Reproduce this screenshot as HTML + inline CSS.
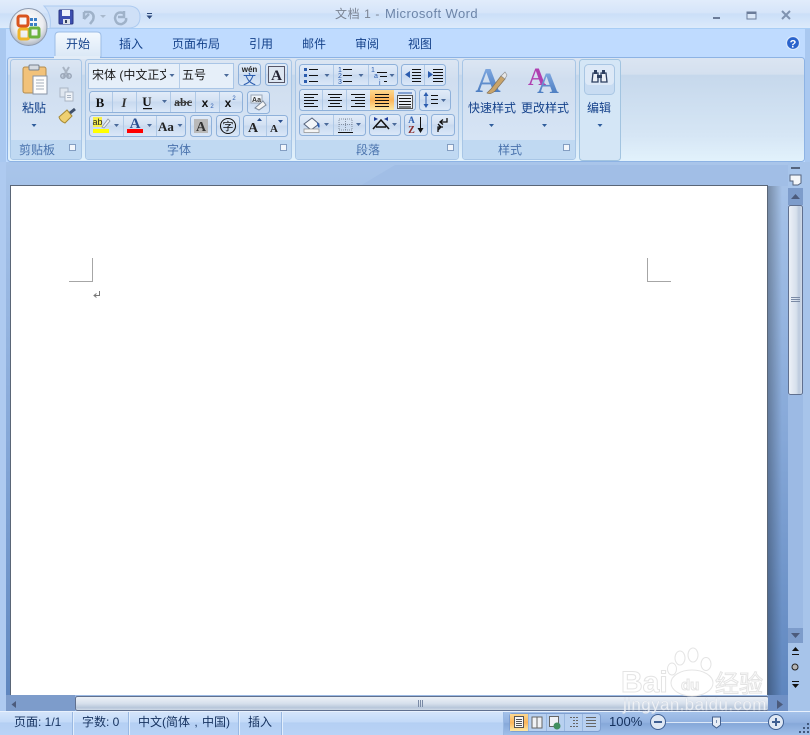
<!DOCTYPE html>
<html><head><meta charset="utf-8"><style>
html,body{margin:0;padding:0;width:810px;height:735px;overflow:hidden;background:#a7c4ea}
svg{display:block}
text{font-family:"Liberation Sans","Noto Sans CJK SC",sans-serif;font-size:12px}
.t{fill:#15428b;text-anchor:middle}
.k{fill:#1a1a1a}
.l{fill:#4a73ad;text-anchor:middle}
.btn{fill:url(#btn);stroke:#8fb1da}
.grp{fill:url(#grp);stroke:#a8c6e6}
.lab{fill:#c0d9f2}
.sep{stroke:#b0c9e6}
.ln{stroke:#111;stroke-width:1;fill:none}
</style></head><body>
<svg width="810" height="735" viewBox="0 0 810 735" xmlns="http://www.w3.org/2000/svg">
<defs>
<linearGradient id="title" x1="0" y1="0" x2="0" y2="1"><stop offset="0" stop-color="#e1ecfb"/><stop offset=".45" stop-color="#d6e5f9"/><stop offset=".5" stop-color="#cbdff8"/><stop offset="1" stop-color="#dceafb"/></linearGradient>
<linearGradient id="rib" x1="0" y1="0" x2="0" y2="1"><stop offset="0" stop-color="#dbe5f2"/><stop offset=".16" stop-color="#d4e0ef"/><stop offset=".17" stop-color="#c6d8ec"/><stop offset=".75" stop-color="#d6e6f5"/><stop offset="1" stop-color="#e2f2fc"/></linearGradient>
<linearGradient id="grp" x1="0" y1="0" x2="0" y2="1"><stop offset="0" stop-color="#dce6f3"/><stop offset=".2" stop-color="#d0deef"/><stop offset=".8" stop-color="#d6e4f5"/><stop offset="1" stop-color="#cfe2f6"/></linearGradient>
<linearGradient id="btn" x1="0" y1="0" x2="0" y2="1"><stop offset="0" stop-color="#e2ecf9"/><stop offset=".45" stop-color="#d3e1f3"/><stop offset=".5" stop-color="#c8d9ef"/><stop offset="1" stop-color="#dbe8f8"/></linearGradient>
<linearGradient id="hot" x1="0" y1="0" x2="0" y2="1"><stop offset="0" stop-color="#fdd990"/><stop offset=".5" stop-color="#fbb55a"/><stop offset="1" stop-color="#fde9a5"/></linearGradient>
<linearGradient id="tab" x1="0" y1="0" x2="0" y2="1"><stop offset="0" stop-color="#f4f9fe"/><stop offset="1" stop-color="#dbe8f6"/></linearGradient>
<linearGradient id="bg" x1="0" y1="0" x2="0" y2="1"><stop offset="0" stop-color="#a9c5ea"/><stop offset=".5" stop-color="#86a8d8"/><stop offset="1" stop-color="#5c84bd"/></linearGradient>
<linearGradient id="shr" x1="0" y1="0" x2="1" y2="0"><stop offset="0" stop-color="#000" stop-opacity=".28"/><stop offset="1" stop-color="#000" stop-opacity="0"/></linearGradient>
<linearGradient id="vth" x1="0" y1="0" x2="1" y2="0"><stop offset="0" stop-color="#eef2f8"/><stop offset=".55" stop-color="#d7e0ec"/><stop offset=".75" stop-color="#bccadd"/><stop offset="1" stop-color="#d5deea"/></linearGradient>
<linearGradient id="hth" x1="0" y1="0" x2="0" y2="1"><stop offset="0" stop-color="#eef2f8"/><stop offset=".5" stop-color="#d7e0ec"/><stop offset=".8" stop-color="#b7c6da"/><stop offset="1" stop-color="#d5deea"/></linearGradient>
<linearGradient id="st" x1="0" y1="0" x2="0" y2="1"><stop offset="0" stop-color="#d6e6fb"/><stop offset=".45" stop-color="#c3daf8"/><stop offset=".5" stop-color="#b4cff3"/><stop offset="1" stop-color="#b9d3f6"/></linearGradient>
<linearGradient id="st2" x1="0" y1="0" x2="0" y2="1"><stop offset="0" stop-color="#a5c2ea"/><stop offset=".45" stop-color="#92b2e0"/><stop offset=".5" stop-color="#86a8d9"/><stop offset="1" stop-color="#a0bfe9"/></linearGradient>
<radialGradient id="orb" cx=".5" cy=".4" r=".65"><stop offset="0" stop-color="#fff"/><stop offset=".6" stop-color="#ecedf0"/><stop offset="1" stop-color="#9fa8b5"/></radialGradient>
<linearGradient id="blueA" x1="0" y1="0" x2="0" y2="1"><stop offset="0" stop-color="#8db4e8"/><stop offset="1" stop-color="#3d70b8"/></linearGradient>
</defs>

<!-- backgrounds -->
<rect width="810" height="735" fill="#a7c4ea"/>
<rect x="6" y="162" width="782" height="550" fill="url(#bg)"/>
<rect x="0" y="162" width="6" height="550" fill="#aecaf0"/>
<rect x="0" y="0" width="810" height="28" fill="url(#title)"/>
<rect x="0" y="28" width="810" height="1" fill="#a8cdf5"/>
<rect x="0" y="29" width="810" height="133" fill="#bfdbff"/>
<rect x="0" y="29" width="6" height="133" fill="#a9c8f0"/>
<rect x="805" y="29" width="5" height="133" fill="#a9c8f0"/>
<path d="M360 186L395 165H790V186Z" fill="#a1bee6"/>

<!-- title bar -->
<text x="335" y="18" style="font-size:12px;letter-spacing:.6px" fill="#7b8493">文档 1 - </text>
<text x="385" y="18" style="font-size:13px;letter-spacing:.42px" fill="#6d85a8">Microsoft Word</text>
<rect x="713" y="17" width="7" height="2" fill="#6b7c99"/>
<rect x="747" y="12" width="9" height="7" fill="#dbe8f8" stroke="#6b7c99"/><rect x="747" y="12" width="9" height="2" fill="#6b7c99"/>
<path d="M782 11L790 19M790 11L782 19" stroke="#7f93b0" stroke-width="2" fill="none"/>

<!-- QAT -->
<path d="M44 6H128Q140 6 140 17Q140 28 128 28H50Q52 14 44 6Z" fill="#cfe0f7" stroke="#aecbf0"/>
<rect x="59" y="10" width="14" height="14" rx="1" fill="#3d4fb0" stroke="#2b3680"/>
<rect x="62" y="10" width="8" height="6" fill="#eef2fb"/><rect x="63" y="19" width="7" height="5" fill="#dfe3ea"/><rect x="65" y="20" width="2" height="3" fill="#33405f"/>
<path d="M84 12V19M84 12H90Q95 14 93 20L90 24M84 19L89 14" stroke="#9fb2c9" stroke-width="2.500" fill="none"/>
<path d="M100 15H106L103 18Z" fill="#a9b9cd"/>
<path d="M124 11V17H118M123 13Q116 11 115 18Q116 25 122 24Q127 22 126 18" stroke="#9fb2c9" stroke-width="2.500" fill="none"/>
<rect x="147" y="13" width="5" height="1" fill="#2d4a7c"/><path d="M146.500 15.500H152.500L149.500 19Z" fill="#2d4a7c"/>

<!-- Tabs -->
<path d="M55 57V36Q55 32 59 32H97Q101 32 101 36V57Z" fill="url(#tab)" stroke="#9dbde6"/>
<text x="78" y="48" class="t">开始</text>
<text x="131" y="48" class="t">插入</text>
<text x="196" y="48" class="t">页面布局</text>
<text x="261" y="48" class="t">引用</text>
<text x="314" y="48" class="t">邮件</text>
<text x="367" y="48" class="t">审阅</text>
<text x="420" y="48" class="t">视图</text>
<circle cx="793" cy="43" r="6.500" fill="#2a63cc" stroke="#d9e8fb" stroke-width="1.200"/>
<text x="793" y="47.500" text-anchor="middle" fill="#fff" style="font-size:11px;font-weight:bold">?</text>

<!-- Ribbon -->
<rect x="7.500" y="57.500" width="797" height="104" rx="3" fill="url(#rib)" stroke="#8db3e4"/>
<rect x="54" y="56" width="46" height="3" fill="#e2ecf7"/>

<!-- Groups -->
<g>
<rect x="10.500" y="59.500" width="71" height="100" rx="3" class="grp"/><path d="M11 140H81V157Q81 159 79 159H13Q11 159 11 157Z" class="lab"/>
<rect x="85.500" y="59.500" width="206" height="100" rx="3" class="grp"/><path d="M86 140H291V157Q291 159 289 159H88Q86 159 86 157Z" class="lab"/>
<rect x="295.500" y="59.500" width="163" height="100" rx="3" class="grp"/><path d="M296 140H458V157Q458 159 456 159H298Q296 159 296 157Z" class="lab"/>
<rect x="462.500" y="59.500" width="113" height="100" rx="3" class="grp"/><path d="M463 140H575V157Q575 159 573 159H465Q463 159 463 157Z" class="lab"/>
<rect x="579.500" y="59.500" width="41" height="101" rx="3" fill="#d4e6f6" stroke="#a2c4e0"/>
</g>
<text x="37" y="154" class="l">剪贴板</text>
<text x="179" y="154" class="l">字体</text>
<text x="368" y="154" class="l">段落</text>
<text x="510" y="154" class="l">样式</text>
<g fill="#f2f6fb" stroke="#6f8cb4" stroke-width=".8">
<rect x="69.500" y="144.500" width="6" height="6"/><rect x="280.500" y="144.500" width="6" height="6"/><rect x="447.500" y="144.500" width="6" height="6"/><rect x="563.500" y="144.500" width="6" height="6"/>
</g>

<!-- Clipboard -->
<rect x="23" y="67" width="23" height="26" rx="2" fill="#f2c27a" stroke="#b38c4e"/>
<rect x="29" y="65" width="10" height="5" rx="1" fill="#d6dbe2" stroke="#77808d"/>
<path d="M33 76H47V94H33Z" fill="#fdfdfd" stroke="#8793a5"/>
<path d="M36 80H44M36 83H44M36 86H44M36 89H44" stroke="#a5aebb"/>
<text x="34" y="112" class="t">粘贴</text>
<path d="M31.500 124H36.500L34 127Z" fill="#2f5d9c"/>
<path d="M63 67L69 77M69 67L63 77" stroke="#a9b4c3" stroke-width="2" fill="none"/><circle cx="63" cy="76" r="2.200" fill="none" stroke="#9aa6b8" stroke-width="1.500"/><circle cx="69" cy="76" r="2.200" fill="none" stroke="#9aa6b8" stroke-width="1.500"/>
<rect x="60" y="88" width="8" height="9" fill="#dfe6ef" stroke="#aab5c4"/><rect x="65" y="92" width="8" height="9" fill="#eef2f7" stroke="#aab5c4"/>
<path d="M67 95.500H71M67 97.500H71" stroke="#aab5c4"/>
<path d="M59 117L67 110L72 116L65 123Q60 121 59 117Z" fill="#efd071" stroke="#a78a36"/><path d="M70 113L75 109" stroke="#3f4f6a" stroke-width="3"/>

<!-- Font controls -->
<rect x="88.500" y="63.500" width="145" height="25" fill="#e6eff9" stroke="#a9c5e6"/>
<line x1="179.500" y1="64" x2="179.500" y2="88" stroke="#b5cde8"/>
<svg x="92" y="64" width="74" height="24"><text x="0" y="15" class="k">宋体 (中文正文)</text></svg>
<path d="M169.500 74H174.500L172 77Z" fill="#4a6a9a"/>
<text x="182" y="79" class="k">五号</text>
<path d="M224 74H229L226.500 77Z" fill="#4a6a9a"/>
<rect x="238.500" y="63.500" width="22" height="22" rx="3" class="btn"/>
<text x="249.500" y="72" text-anchor="middle" style="font-size:8px;font-weight:bold" fill="#222">wén</text>
<text x="249.500" y="84" text-anchor="middle" style="font-size:13px" fill="#2b5cae">文</text>
<rect x="265.500" y="63.500" width="22" height="22" rx="3" class="btn"/>
<rect x="268.500" y="66.500" width="16" height="16" fill="#dde6f2" stroke="#556"/>
<text x="276.500" y="80" text-anchor="middle" style="font-family:'Liberation Serif';font-size:15px;font-weight:bold" fill="#223">A</text>

<rect x="89.500" y="91.500" width="153" height="21" rx="3" class="btn"/>
<path class="sep" d="M112.500 92V112M136.500 92V112M170.500 92V112M195.500 92V112M219.500 92V112"/>
<text x="100" y="107" text-anchor="middle" style="font-family:'Liberation Serif';font-size:13px;font-weight:bold" fill="#111">B</text>
<text x="124" y="107" text-anchor="middle" style="font-family:'Liberation Serif';font-size:13px;font-style:italic;font-weight:bold" fill="#333">I</text>
<text x="147" y="106" text-anchor="middle" style="font-family:'Liberation Serif';font-size:13px;font-weight:bold" fill="#111">U</text>
<rect x="143" y="108" width="9" height="1.200" fill="#111"/>
<path d="M162 100H167L164.500 103Z" fill="#4a6a9a"/>
<text x="183" y="106" text-anchor="middle" style="font-family:'Liberation Serif';font-size:12px;font-weight:bold" fill="#333">abc</text>
<rect x="175" y="102" width="17" height="1" fill="#444"/>
<text x="205" y="107" text-anchor="middle" style="font-size:12px;font-weight:bold" fill="#111">x</text><text x="212" y="108" text-anchor="middle" style="font-size:6px" fill="#2b5cae">2</text>
<text x="228" y="107" text-anchor="middle" style="font-size:12px;font-weight:bold" fill="#111">x</text><text x="234" y="100" text-anchor="middle" style="font-size:6px" fill="#2b5cae">2</text>
<rect x="247.500" y="91.500" width="22" height="22" rx="3" class="btn"/>
<rect x="251" y="95" width="11" height="8" fill="#eef3f9" stroke="#9aa7b8"/><text x="256.500" y="102" text-anchor="middle" style="font-size:7px;font-weight:bold" fill="#333">Aa</text>
<path d="M255 108L263 101L266 105L259 110Z" fill="#f4f4f4" stroke="#7e8b9c"/>

<rect x="89.500" y="115.500" width="96" height="21" rx="3" class="btn"/>
<path class="sep" d="M123.500 116V136M156.500 116V136"/>
<rect x="93" y="117" width="9" height="10" fill="#f8f04a"/>
<text x="97.500" y="125" text-anchor="middle" style="font-size:9px" fill="#222">ab</text>
<path d="M102 127L108 119L110 121L104 128Z" fill="#eef1f5" stroke="#8d97a6" stroke-width=".8"/>
<rect x="93" y="129" width="16" height="4" fill="#ffff00"/>
<path d="M114 124H119L116.500 127Z" fill="#4a6a9a"/>
<text x="135" y="128" text-anchor="middle" style="font-family:'Liberation Serif';font-size:15px;font-weight:bold" fill="#2a4f8f">A</text>
<rect x="127" y="129" width="16" height="4" fill="#ff0000"/>
<path d="M147 124H152L149.500 127Z" fill="#4a6a9a"/>
<text x="166" y="131" text-anchor="middle" style="font-family:'Liberation Serif';font-size:13px;font-weight:bold" fill="#222">Aa</text>
<path d="M177.500 124H182.500L180 127Z" fill="#4a6a9a"/>
<rect x="190.500" y="115.500" width="21" height="21" rx="3" class="btn"/>
<rect x="194" y="119" width="14" height="14" fill="#b9b9b9"/>
<text x="201" y="131" text-anchor="middle" style="font-family:'Liberation Serif';font-size:14px;font-weight:bold" fill="#333">A</text>
<rect x="216.500" y="115.500" width="23" height="21" rx="3" class="btn"/>
<circle cx="228" cy="126" r="7.500" fill="none" stroke="#111"/>
<text x="228" y="130" text-anchor="middle" style="font-size:11px" fill="#111">字</text>
<rect x="243.500" y="115.500" width="44" height="21" rx="3" class="btn"/>
<path class="sep" d="M266.500 116V136"/>
<text x="253" y="132" text-anchor="middle" style="font-family:'Liberation Serif';font-size:14px;font-weight:bold" fill="#222">A</text>
<path d="M257 121H262L259.500 118Z" fill="#2a4f8f"/>
<text x="274" y="132" text-anchor="middle" style="font-family:'Liberation Serif';font-size:11px;font-weight:bold" fill="#222">A</text>
<path d="M278 120H283L280.500 123Z" fill="#2a4f8f"/>

<!-- Paragraph -->
<rect x="299.500" y="64.500" width="98" height="21" rx="3" class="btn"/>
<path class="sep" d="M333.500 65V85M368.500 65V85"/>
<path d="M309 69.500H318M309 75.500H318M309 81.500H318M343 69.500H352M343 75.500H352M343 81.500H352M377 72.500H387M380 76.500H387M384 81.500H387" class="ln"/>
<g fill="#2b5cae"><rect x="304" y="68" width="3" height="3"/><rect x="304" y="74" width="3" height="3"/><rect x="304" y="80" width="3" height="3"/></g>
<g fill="#2b5cae"><text x="340" y="72" text-anchor="middle" style="font-size:7px">1</text><text x="340" y="78" text-anchor="middle" style="font-size:7px">2</text><text x="340" y="84" text-anchor="middle" style="font-size:7px">3</text><text x="371" y="72" style="font-size:7px">1</text><text x="374" y="78" style="font-size:7px">a</text><text x="379" y="85" style="font-size:7px">i</text></g>
<path d="M324.500 74H329.500L327 77ZM358.500 74H363.500L361 77ZM389.500 74H394.500L392 77Z" fill="#4a6a9a"/>
<rect x="401.500" y="64.500" width="44" height="21" rx="3" class="btn"/>
<path class="sep" d="M424.500 65V85"/>
<path d="M412 69.500H421M412 72.500H421M412 75.500H421M412 78.500H421M412 81.500H421M433 69.500H443M433 72.500H443M433 75.500H443M433 78.500H443M433 81.500H443" stroke="#111"/>
<path d="M405 74.500L410 71V78Z M433 74.500L428 71V78Z" fill="#2b5cae"/>

<rect x="299.500" y="89.500" width="116" height="21" rx="3" class="btn"/>
<rect x="370" y="90" width="24" height="20" fill="url(#hot)"/>
<path class="sep" d="M322.500 90V110M346.500 90V110"/>
<path d="M304 94.500H318M304 97.500H314M304 100.500H318M304 103.500H314M304 106.500H318M328 94.500H342M330 97.500H340M328 100.500H342M330 103.500H340M328 106.500H342M351 94.500H365M355 97.500H365M351 100.500H365M355 103.500H365M351 106.500H365M375 94.500H389M375 97.500H389M375 100.500H389M375 103.500H389M375 106.500H389" stroke="#111"/>
<rect x="397.500" y="95.500" width="15" height="13" fill="#e8eef6" stroke="#555"/>
<path d="M399 98.500H411M399 101.500H411M399 104.500H411M399 107H411" stroke="#111"/>
<path d="M398 93H412" stroke="#2b5cae"/>
<rect x="419.500" y="89.500" width="31" height="21" rx="3" class="btn"/>
<path d="M426 93V107" stroke="#2b5cae"/><path d="M423.500 96L426 92L428.500 96ZM423.500 104L426 108L428.500 104Z" fill="#2b5cae"/>
<path d="M431 95.500H438M431 99.500H438M431 103.500H438" stroke="#111"/>
<path d="M441 99H446L443.500 102Z" fill="#4a6a9a"/>

<rect x="299.500" y="114.500" width="66" height="21" rx="3" class="btn"/>
<path class="sep" d="M333.500 115V135"/>
<path d="M304 124L312 118L319 124L311 130Z" fill="#f2f5f9" stroke="#55617a"/>
<path d="M317 122Q321 125 319 128Q317 126 317 122Z" fill="#2b5cae"/>
<rect x="304" y="129" width="15" height="3.500" fill="#f4f4f4" stroke="#8a8a8a" stroke-width=".7"/>
<path d="M324 123H329L326.500 126ZM356 123H361L358.500 126Z" fill="#4a6a9a"/>
<path d="M339 119H352V130H339ZM345.500 119V130M339 124.500H352" stroke="#8390a2" stroke-dasharray="1 1" fill="none"/>
<path d="M338 132.500H353" stroke="#111"/>
<rect x="369.500" y="114.500" width="31" height="21" rx="3" class="btn"/>
<path d="M373 129L381 120L389 129M376 127H386" stroke="#111" stroke-width="1.500" fill="none"/>
<path d="M374 117L378 119L374 121ZM388 117L384 119L388 121Z" fill="#1f3f9c"/>
<path d="M392 123H397L394.500 126Z" fill="#4a6a9a"/>
<rect x="404.500" y="114.500" width="23" height="21" rx="3" class="btn"/>
<text x="411.500" y="123" text-anchor="middle" style="font-family:'Liberation Serif';font-size:9px;font-weight:bold" fill="#2b5cae">A</text>
<text x="411.500" y="133" text-anchor="middle" style="font-family:'Liberation Serif';font-size:10px;font-weight:bold" fill="#8a2b2b">Z</text>
<path d="M420.500 117V132" stroke="#111"/><path d="M417.500 128L420.500 133L423.500 128Z" fill="#111"/>
<rect x="431.500" y="114.500" width="23" height="21" rx="3" class="btn"/>
<path d="M447 118V122H440M443 119.500L440 122L443 124.500M438 132V127H443M438 124L441 127L438 130" stroke="#111" stroke-width="1.300" fill="none"/>

<!-- Styles -->
<text x="488" y="92" text-anchor="middle" style="font-family:'Liberation Serif';font-size:35px;font-weight:bold" fill="url(#blueA)">A</text>
<path d="M491 89L501 76L505 79L495 91Q490 95 487 93Z" fill="#c9a46a" stroke="#85745c" stroke-width=".7"/>
<path d="M501 76L505 72L507 75L505 79Z" fill="#e6e6e6" stroke="#8a8a8a" stroke-width=".6"/>
<text x="537" y="85" text-anchor="middle" style="font-family:'Liberation Serif';font-size:25px;font-weight:bold" fill="#b040b0">A</text>
<text x="548" y="93" text-anchor="middle" style="font-family:'Liberation Serif';font-size:30px;font-weight:bold" fill="url(#blueA)">A</text>
<text x="492" y="112" class="t">快速样式</text>
<text x="545" y="112" class="t">更改样式</text>
<path d="M489 124H494L491.500 127ZM542 124H547L544.500 127Z" fill="#2f5d9c"/>
<rect x="584.500" y="64.500" width="30" height="30" rx="4" fill="#c8dcf2" stroke="#a9c6e3"/>
<rect x="585" y="65" width="29" height="20" rx="4" fill="#dde9f7"/>
<path d="M593 73H598V82H592ZM601 73H606L607 82H601Z" fill="#eef2f8" stroke="#2d3f60" stroke-width="1.300"/>
<rect x="594" y="70" width="3" height="4" fill="#2d3f60"/><rect x="602" y="70" width="3" height="4" fill="#2d3f60"/><rect x="597" y="75" width="5" height="3" fill="#2d3f60"/>
<text x="599" y="112" class="t">编辑</text>
<path d="M597.500 124H602.500L600 127Z" fill="#2f5d9c"/>

<!-- Office orb -->
<circle cx="28.500" cy="27" r="18.500" fill="url(#orb)" stroke="#8e9bb0"/>
<rect x="18" y="16" width="10" height="10" rx="2" fill="none" stroke="#d9541e" stroke-width="3"/>
<rect x="19" y="29" width="10" height="10" rx="2" fill="none" stroke="#f0b429" stroke-width="3"/>
<rect x="30" y="28" width="9" height="9" rx="1" fill="none" stroke="#6cb33f" stroke-width="3"/>
<g fill="#3d7fc4"><rect x="30" y="18" width="3" height="3"/><rect x="34" y="18" width="3" height="3"/><rect x="30" y="23" width="3" height="3"/><rect x="34" y="23" width="3" height="3"/></g>

<!-- Document -->
<rect x="768" y="186" width="14" height="510" fill="url(#shr)"/>
<rect x="10.500" y="185.500" width="757" height="512" fill="#fff" stroke="#5a6677"/>
<path d="M69 281.500H92.500V258M647.500 258V281.500H671" stroke="#a6a6a6" fill="none"/>
<path d="M99.500 291V295.500H94.500M96.500 293.500L94 295.500L96.500 297.500" stroke="#777" fill="none"/>

<!-- Right scrollbar -->
<rect x="788" y="162" width="22" height="550" fill="#a7c4ea"/>
<rect x="791" y="167" width="9" height="2" fill="#55647d"/>
<path d="M790 175H801V183L798 185H793V181H790Z" fill="#f4f6f9" stroke="#55647d"/>
<rect x="788" y="188" width="15" height="17" fill="#7d9ccb"/>
<path d="M791 199H800L795.500 194Z" fill="#4c5b7c"/>
<rect x="788.500" y="205.500" width="14" height="189" rx="2" fill="url(#vth)" stroke="#60708f"/>
<path d="M791 297.500H800M791 299.500H800M791 301.500H800" stroke="#7a8aa5"/>
<rect x="788" y="395" width="15" height="233" fill="#9cbae4"/>
<rect x="788" y="628" width="15" height="15" fill="#7d9ccb"/>
<path d="M791 633H800L795.500 638Z" fill="#4c5b7c"/>
<path d="M792 651H799L795.500 647Z M792 654H799V655H792Z" fill="#111"/>
<circle cx="795" cy="667" r="3" fill="#b5b5b5" stroke="#222"/>
<path d="M792 681H799V682H792ZM792 684H799L795.500 688Z" fill="#111"/>

<!-- Horizontal scrollbar -->
<rect x="6" y="695" width="782" height="16" fill="#9cbae4"/>
<rect x="6" y="695" width="69" height="16" fill="#7d9ccb"/>
<path d="M16 701V708L11.500 704.500Z" fill="#4c5b7c"/>
<rect x="75.500" y="696.500" width="693" height="14" rx="2" fill="url(#hth)" stroke="#60708f"/>
<path d="M418.500 700V707M420.500 700V707M422.500 700V707" stroke="#7a8aa5"/>
<rect x="768" y="695" width="20" height="16" fill="#6f90c5"/>
<path d="M777 700V709L783 704.500Z" fill="#4c5b7c"/>

<!-- Status bar -->
<rect x="0" y="711" width="810" height="24" fill="url(#st)"/>
<rect x="0" y="711" width="810" height="1" fill="#e8f1fd"/>
<rect x="503" y="712" width="307" height="23" fill="url(#st2)"/>
<text x="14" y="726" fill="#15315e">页面: 1/1</text>
<text x="82" y="726" fill="#15315e">字数: 0</text>
<text x="138" y="726" fill="#15315e" style="word-spacing:1px">中文(简体 , 中国)</text>
<text x="248" y="726" fill="#15315e">插入</text>
<path d="M72.500 712V735M128.500 712V735M238.500 712V735M281.500 712V735M503.500 712V735" stroke="#99b8e2"/>
<path d="M73.500 712V735M129.500 712V735M239.500 712V735M282.500 712V735" stroke="#e2eefc"/>
<rect x="509.500" y="713.500" width="91" height="18" rx="3" fill="#b8d0f0" stroke="#7f9fd0"/>
<rect x="510" y="714" width="18" height="17" fill="url(#hot)"/>
<path d="M528.500 714V731M546.500 714V731M564.500 714V731M582.500 714V731" stroke="#9ab8e0"/>
<rect x="514.500" y="716.500" width="9" height="11" fill="#f7f7f7" stroke="#555"/><path d="M516 719.500H522M516 721.500H522M516 723.500H522M516 725.500H522" stroke="#555"/>
<path d="M532 717H537V728H532ZM537 717H542V728H537Z" fill="#f0f2f6" stroke="#666"/>
<rect x="549.500" y="716.500" width="9" height="10" fill="#eef1f6" stroke="#666"/><circle cx="557" cy="726" r="3.500" fill="#3f8f5f"/>
<path d="M570 717.500H578M573 720.500H578M573 723.500H578M570 726.500H578" stroke="#666" stroke-dasharray="2 1"/>
<path d="M586 717.500H596M586 720.500H596M586 723.500H596M586 726.500H596" stroke="#666"/>
<text x="609" y="726" fill="#15315e" style="font-size:13px">100%</text>
<line x1="666" y1="722.500" x2="768" y2="722.500" stroke="#dbe7f7"/>
<circle cx="658" cy="722" r="7.500" fill="#dfe8f4" stroke="#3f5f92"/><rect x="654" y="721" width="8" height="2" fill="#3f5f92"/>
<circle cx="776" cy="722" r="7.500" fill="#dfe8f4" stroke="#3f5f92"/><path d="M772 722H780M776 718V726" stroke="#3f5f92" stroke-width="2"/>
<path d="M712.500 717H720.500V725L716.500 728L712.500 725Z" fill="#e7edf6" stroke="#44618f"/>
<path d="M716.500 720V723" stroke="#7e92b2"/>
<g fill="#41587c"><rect x="799" y="731" width="2" height="2"/><rect x="803" y="731" width="2" height="2"/><rect x="807" y="731" width="2" height="2"/><rect x="803" y="727" width="2" height="2"/><rect x="807" y="727" width="2" height="2"/><rect x="807" y="723" width="2" height="2"/></g>

<!-- Watermark -->
<g fill="#fff" stroke="#e4e4e4" stroke-width="1">
<ellipse cx="692" cy="683" rx="21" ry="13"/>
<ellipse cx="680" cy="658" rx="5" ry="7"/><ellipse cx="693" cy="655" rx="5" ry="7"/><ellipse cx="706" cy="664" rx="5" ry="6.500"/><ellipse cx="672" cy="669" rx="4.500" ry="6"/>
<text x="621" y="692" style="font-size:30px;font-weight:bold">Bai</text>
<text x="681" y="690" style="font-size:15px;font-weight:bold">du</text>
<text x="715" y="692" style="font-size:24px">经验</text>
</g>
<text x="623" y="710" style="font-size:17px;letter-spacing:.4px" fill="#fff" fill-opacity=".7" stroke="#d6dce6" stroke-width=".4">jingyan.baidu.com</text>
</svg>
</body></html>
